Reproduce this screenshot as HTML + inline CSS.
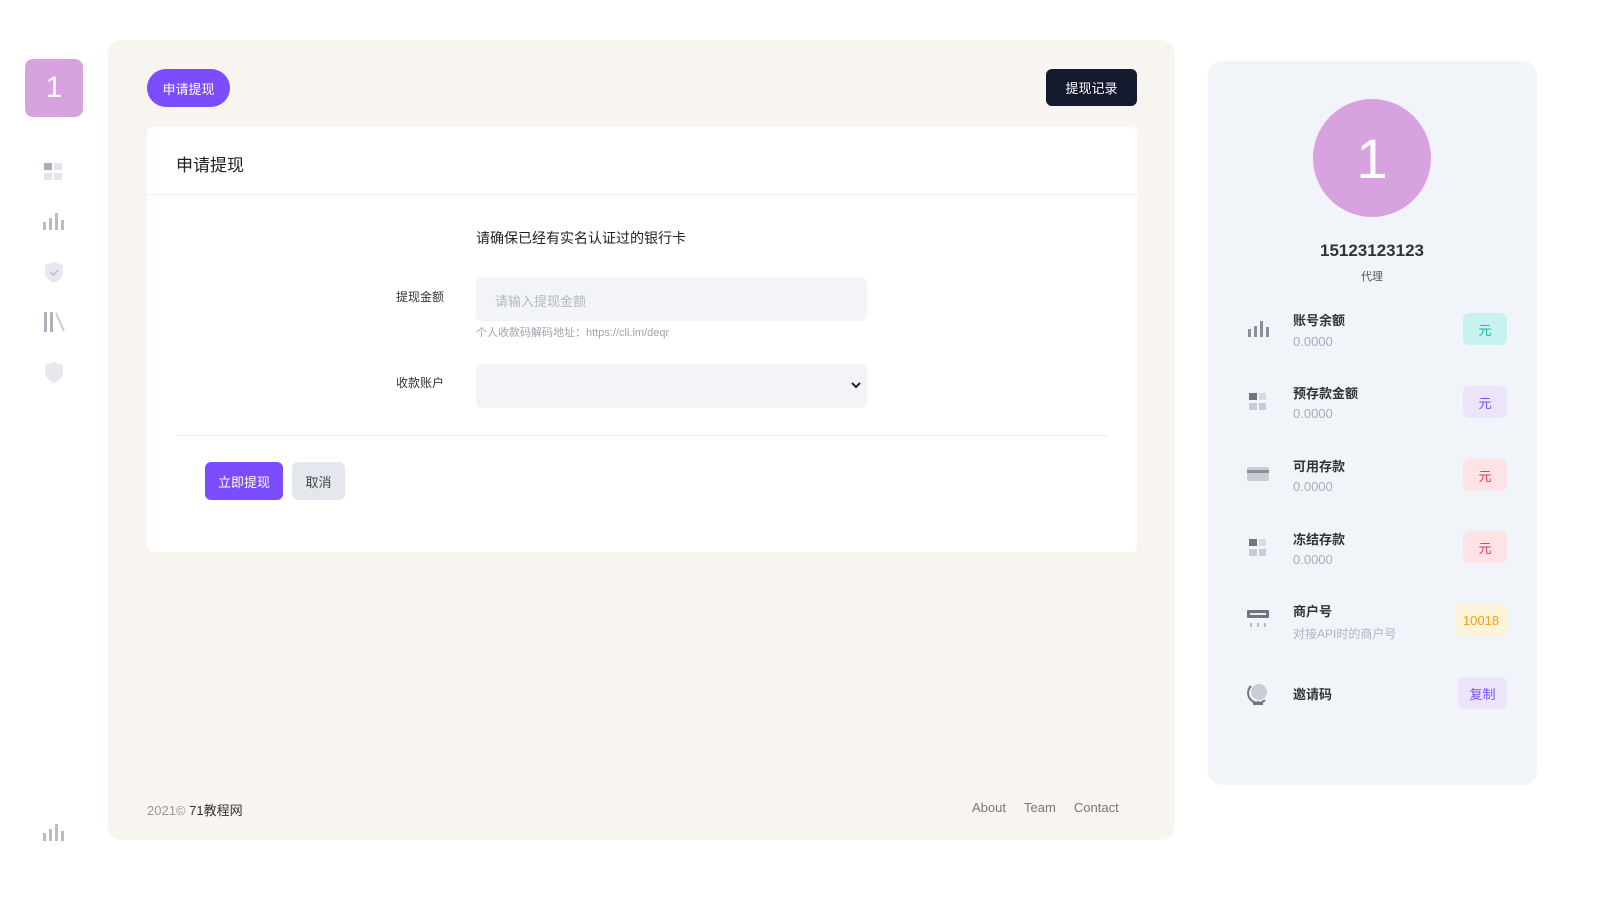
<!DOCTYPE html>
<html><head><meta charset="utf-8"><style>
*{margin:0;padding:0;box-sizing:border-box}
body{width:1600px;height:900px;background:#fff;font-family:"Liberation Sans","Noto Sans CJK SC",sans-serif;position:relative;overflow:hidden;color:#222}
.abs{position:absolute}
.logo{left:25px;top:59px;width:58px;height:58px;border-radius:8px;background:#d8a2e0;color:#fff;font-size:30px;display:flex;align-items:center;justify-content:center}
.main{left:108px;top:40px;width:1067px;height:800px;background:#f8f5f1;border-radius:14px}
.btn1{left:147px;top:69px;width:83px;height:38px;border-radius:19px;background:#7c4dff;color:#fff;font-size:13px;display:flex;align-items:center;justify-content:center}
.btn2{left:1046px;top:69px;width:91px;height:37px;border-radius:6px;background:#141a2e;color:#fff;font-size:13px;display:flex;align-items:center;justify-content:center}
.card{left:147px;top:127px;width:990px;height:425px;background:#fff;border-radius:6px}
.inp{background:#f2f4f8;border-radius:6px}
.right{left:1208px;top:61px;width:329px;height:724px;background:#f1f5f9;border-radius:14px}
.av{left:1313px;top:99px;width:118px;height:118px;border-radius:50%;background:#d8a2e0;color:#fff;font-size:56px;display:flex;align-items:center;justify-content:center}
.lbl{font-size:13px;font-weight:bold;color:#333}
.val{font-size:13px;color:#aab}
.tag{width:44px;height:32px;border-radius:6px;font-size:13px;display:flex;align-items:center;justify-content:center}
.ic{color:#b8bcc6}
</style></head><body>
<div class="abs logo">1</div>
<svg class="abs" style="left:43px;top:162px" width="22" height="20"><rect x="1" y="1" width="8" height="7" fill="#a9adb6"/><rect x="11" y="1" width="8" height="7" fill="#e3e5ea"/><rect x="1" y="11" width="8" height="7" fill="#e3e5ea"/><rect x="11" y="11" width="8" height="7" fill="#e3e5ea"/></svg>
<svg class="abs" style="left:42px;top:212px" width="24" height="20"><g fill="#b8bcc6"><rect x="1" y="10" width="3" height="8"/><rect x="7" y="6" width="3" height="12"/><rect x="13" y="1" width="3" height="17"/><rect x="19" y="8" width="3" height="10"/></g></svg>
<svg class="abs" style="left:44px;top:262px" width="20" height="22"><path d="M1 3 L10 0 L19 3 V11 C19 17 10 21 10 21 C10 21 1 17 1 11Z" fill="#e6e8ed"/><path d="M6 10 L9 13 L14 8" stroke="#b8bcc6" stroke-width="1.5" fill="none"/></svg>
<svg class="abs" style="left:42px;top:311px" width="24" height="22"><g fill="#aeb2bc"><rect x="2" y="1" width="3" height="20"/><rect x="8" y="1" width="3" height="20"/></g><path d="M14 2 L22 20" stroke="#c8ccd4" stroke-width="2"/></svg>
<svg class="abs" style="left:44px;top:362px" width="20" height="22"><path d="M1 3 L10 0 L19 3 V11 C19 17 10 21 10 21 C10 21 1 17 1 11Z" fill="#e6e8ed"/></svg>
<svg class="abs" style="left:42px;top:823px" width="24" height="20"><g fill="#b8bcc6"><rect x="1" y="10" width="3" height="8"/><rect x="7" y="6" width="3" height="12"/><rect x="13" y="1" width="3" height="17"/><rect x="19" y="8" width="3" height="10"/></g></svg>

<div class="abs main"></div>
<div class="abs btn1">申请提现</div>
<div class="abs btn2">提现记录</div>
<div class="abs card">
 <div class="abs" style="left:29px;top:24px;font-size:17px;color:#222">申请提现</div>
 <div class="abs" style="left:0;top:67px;width:990px;height:1px;background:#eef0f3"></div>
 <div class="abs" style="left:329px;top:101px;font-size:14px;color:#222">请确保已经有实名认证过的银行卡</div>
 <div class="abs" style="left:249px;top:161px;font-size:12px;color:#333">提现金额</div>
 <div class="abs inp" style="left:329px;top:150px;width:391px;height:44px"><span class="abs" style="left:19px;top:14px;font-size:13px;color:#b4b8c0">请输入提现金额</span></div>
 <div class="abs" style="left:329px;top:197px;font-size:11px;color:#a0a4ae">个人收款码解码地址：https://cli.im/deqr</div>
 <div class="abs" style="left:249px;top:247px;font-size:12px;color:#333">收款账户</div>
 <div class="abs inp" style="left:329px;top:237px;width:391px;height:44px"><svg class="abs" style="left:375px;top:18px" width="10" height="8"><path d="M1 1 L5 5 L9 1" stroke="#222" stroke-width="2" fill="none"/></svg></div>
 <div class="abs" style="left:29px;top:308px;width:932px;height:1px;background:#eef0f3"></div>
 <div class="abs" style="left:58px;top:335px;width:78px;height:38px;border-radius:6px;background:#7c4dff;color:#fff;font-size:13px;display:flex;align-items:center;justify-content:center">立即提现</div>
 <div class="abs" style="left:145px;top:335px;width:53px;height:38px;border-radius:6px;background:#e4e7ed;color:#444;font-size:13px;display:flex;align-items:center;justify-content:center">取消</div>
</div>
<div class="abs" style="left:147px;top:800px;font-size:13px;color:#999">2021© <span style="color:#333">71教程网</span></div>
<div class="abs" style="left:972px;top:800px;font-size:13px;color:#777;word-spacing:0">About&nbsp;&nbsp;&nbsp;&nbsp;&nbsp;Team&nbsp;&nbsp;&nbsp;&nbsp;&nbsp;Contact</div>

<div class="abs right"></div>
<div class="abs av">1</div>
<div class="abs" style="left:1272px;top:241px;width:200px;text-align:center;font-size:17px;font-weight:bold;color:#333">15123123123</div>
<div class="abs" style="left:1272px;top:268px;width:200px;text-align:center;font-size:11px;color:#555">代理</div>

<svg class="abs" style="left:1247px;top:320px" width="22" height="18"><g fill="#8a8f9a"><rect x="1" y="9" width="3" height="8"/><rect x="7" y="6" width="3" height="11"/><rect x="13" y="1" width="3" height="16"/><rect x="19" y="7" width="3" height="10"/></g></svg>
<div class="abs lbl" style="left:1293px;top:310px">账号余额</div><div class="abs val" style="left:1293px;top:334px">0.0000</div>
<div class="abs tag" style="left:1463px;top:313px;background:#c8f2f0;color:#1fb5aa">元</div>

<svg class="abs" style="left:1248px;top:392px" width="20" height="20"><rect x="1" y="1" width="8" height="7" fill="#70757f"/><rect x="11" y="1" width="7" height="7" fill="#d8dbe1"/><rect x="1" y="11" width="8" height="7" fill="#c8ccd4"/><rect x="11" y="11" width="7" height="7" fill="#c8ccd4"/></svg>
<div class="abs lbl" style="left:1293px;top:383px">预存款金额</div><div class="abs val" style="left:1293px;top:406px">0.0000</div>
<div class="abs tag" style="left:1463px;top:386px;background:#ebe4fb;color:#7c4dff">元</div>

<svg class="abs" style="left:1247px;top:466px" width="22" height="16"><rect x="0" y="1" width="22" height="14" rx="2" fill="#c8ccd4"/><rect x="0" y="4" width="22" height="3" fill="#8a8f9a"/></svg>
<div class="abs lbl" style="left:1293px;top:456px">可用存款</div><div class="abs val" style="left:1293px;top:479px">0.0000</div>
<div class="abs tag" style="left:1463px;top:459px;background:#fde2e6;color:#e0405a">元</div>

<svg class="abs" style="left:1248px;top:538px" width="20" height="20"><rect x="1" y="1" width="8" height="7" fill="#70757f"/><rect x="11" y="1" width="7" height="7" fill="#d8dbe1"/><rect x="1" y="11" width="8" height="7" fill="#c8ccd4"/><rect x="11" y="11" width="7" height="7" fill="#c8ccd4"/></svg>
<div class="abs lbl" style="left:1293px;top:529px">冻结存款</div><div class="abs val" style="left:1293px;top:552px">0.0000</div>
<div class="abs tag" style="left:1463px;top:531px;background:#fde2e6;color:#e0405a">元</div>

<svg class="abs" style="left:1247px;top:609px" width="22" height="22"><rect x="0" y="1" width="22" height="8" rx="1" fill="#70757f"/><rect x="3" y="4" width="16" height="2" fill="#e8eaee"/><g fill="#b8bcc6"><rect x="3" y="14" width="2" height="4"/><rect x="10" y="14" width="2" height="4"/><rect x="17" y="14" width="2" height="4"/></g></svg>
<div class="abs lbl" style="left:1293px;top:601px">商户号</div><div class="abs" style="left:1293px;top:625px;font-size:12px;color:#b0b4bd">对接API时的商户号</div>
<div class="abs tag" style="left:1455px;top:604px;width:52px;background:#fdf3d9;color:#f0a020">10018</div>

<svg class="abs" style="left:1247px;top:682px" width="22" height="24"><circle cx="12" cy="10" r="8" fill="#c8ccd4"/><path d="M4 4 A9 9 0 0 0 18 18" stroke="#70757f" stroke-width="2" fill="none"/><path d="M11 19 V22 M6 22 H16" stroke="#70757f" stroke-width="2"/></svg>
<div class="abs lbl" style="left:1293px;top:684px">邀请码</div>
<div class="abs tag" style="left:1458px;top:677px;width:49px;background:#ebe4fb;color:#7c4dff">复制</div>
</body></html>
